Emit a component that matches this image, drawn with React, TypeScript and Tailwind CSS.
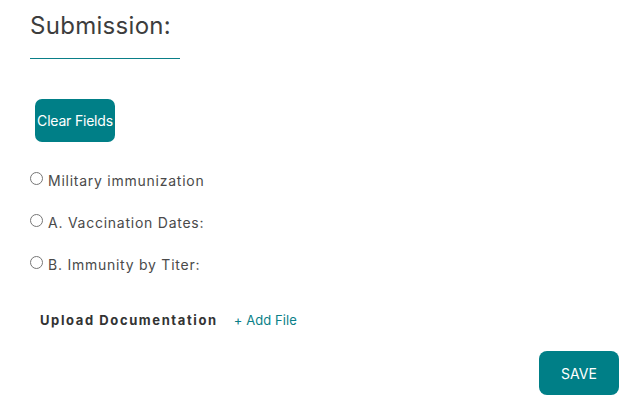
import React from 'react';

const rows = ['Military immunization', 'A. Vaccination Dates:', 'B. Immunity by Titer:'];

export default function App() {
  return (
    <div className="w-[638px] h-[415px] bg-white pl-[30px] pr-[19px] pt-[10px] flex flex-col font-['Inter',sans-serif]">
      <h1 className="text-[24px] leading-[32px] text-[#3d3d3d] font-normal tracking-[0.3px]">Submission:</h1>
      <div className="mt-[16px] w-[150px] h-px bg-[#0a7f88]" />

      <button className="mt-[40px] ml-[5px] w-[80px] h-[43px] rounded-[7px] bg-[#007f87] text-white text-[14px] tracking-[-0.2px]">
        Clear Fields
      </button>

      <div className="mt-[28px] flex flex-col gap-[22px]">
        {rows.map((r) => (
          <label key={r} className="h-[20px] flex items-center gap-[5px]">
            <input type="radio" name="sub" className="w-[13px] h-[13px] m-0 -mt-[3px]" />
            <span className="text-[14px] text-[#4a4a4a] tracking-[0.75px]">{r}</span>
          </label>
        ))}
      </div>

      <div className="mt-[37px] ml-[10px] h-[20px] flex items-center gap-[16px]">
        <span className="text-[13px] font-bold text-[#333] tracking-[1.6px]">Upload Documentation</span>
        <span className="text-[13px] text-[#0a7f88] tracking-[0.1px]">+ Add File</span>
      </div>

      <div className="mt-[20px] flex justify-end">
        <button className="w-[80px] h-[44px] rounded-[8px] bg-[#007f87] text-white text-[14px]">SAVE</button>
      </div>
    </div>
  );
}
